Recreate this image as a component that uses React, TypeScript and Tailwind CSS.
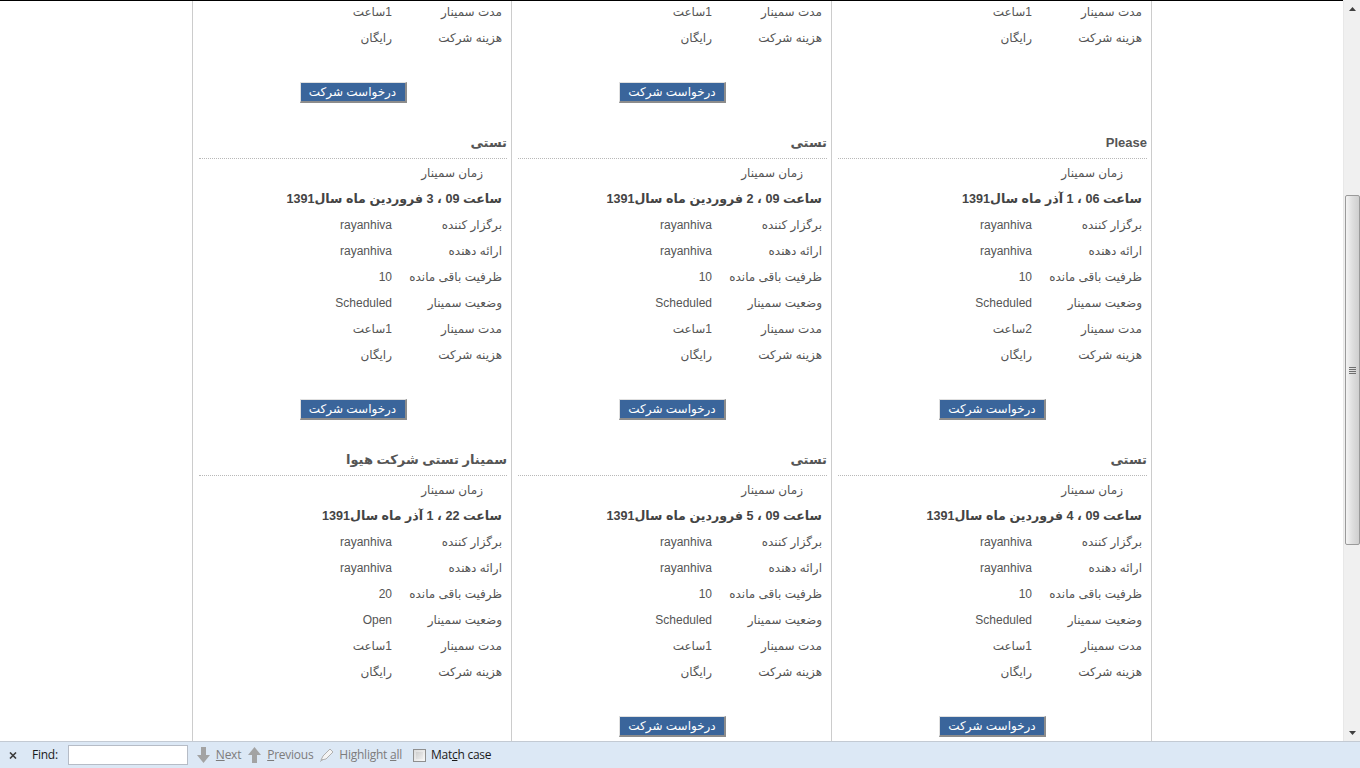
import React from 'react'

interface Seminar {
  title: string
  date: string
  capacity: string
  status: string
  duration: string
  hasButton: boolean
}

const seminars: Seminar[] = [
  { title: 'تستی', date: 'ساعت 09 ، 1 فروردین ماه سال1391', capacity: '10', status: 'Scheduled', duration: '1ساعت', hasButton: false },
  { title: 'تستی', date: 'ساعت 09 ، 1 فروردین ماه سال1391', capacity: '10', status: 'Scheduled', duration: '1ساعت', hasButton: true },
  { title: 'تستی', date: 'ساعت 09 ، 1 فروردین ماه سال1391', capacity: '10', status: 'Scheduled', duration: '1ساعت', hasButton: true },
  { title: 'Please', date: 'ساعت 06 ، 1 آذر ماه سال1391', capacity: '10', status: 'Scheduled', duration: '2ساعت', hasButton: true },
  { title: 'تستی', date: 'ساعت 09 ، 2 فروردین ماه سال1391', capacity: '10', status: 'Scheduled', duration: '1ساعت', hasButton: true },
  { title: 'تستی', date: 'ساعت 09 ، 3 فروردین ماه سال1391', capacity: '10', status: 'Scheduled', duration: '1ساعت', hasButton: true },
  { title: 'تستی', date: 'ساعت 09 ، 4 فروردین ماه سال1391', capacity: '10', status: 'Scheduled', duration: '1ساعت', hasButton: true },
  { title: 'تستی', date: 'ساعت 09 ، 5 فروردین ماه سال1391', capacity: '10', status: 'Scheduled', duration: '1ساعت', hasButton: true },
  { title: 'سمینار تستی شرکت هیوا', date: 'ساعت 22 ، 1 آذر ماه سال1391', capacity: '20', status: 'Open', duration: '1ساعت', hasButton: false },
]

function SeminarCard({ s }: { s: Seminar }) {
  const fields: [string, string][] = [
    ['برگزار کننده', 'rayanhiva'],
    ['ارائه دهنده', 'rayanhiva'],
    ['ظرفیت باقی مانده', s.capacity],
    ['وضعیت سمینار', s.status],
    ['مدت سمینار', s.duration],
    ['هزینه شرکت', 'رایگان'],
  ]
  return (
    <div className="h-[317px] border-r border-[#cccccc] pl-[6px] pr-[4px] pt-[10px]">
      <h3 className="h-[27px] border-b border-dotted border-[#b8b8b8] pb-[6px] text-[13px] font-bold leading-[22px] text-[#555555]">
        {s.title}
      </h3>
      <div className="mt-[4px] h-[20px] pr-[24px] text-[12px] leading-[20px] text-[#555555]">زمان سمینار</div>
      <div className="mt-[5px] h-[20px] pr-[5px] text-[12.6px] font-bold leading-[22px] text-[#444444]">{s.date}</div>
      <div className="mt-[4px] flex flex-col">
        {fields.map(([label, value]) => (
          <div key={label} className="flex h-[26px] items-center pr-[5px] text-[12px] text-[#555555]">
            <span className="w-[110px] shrink-0">{label}</span>
            <span>{value}</span>
          </div>
        ))}
      </div>
      <div className="mt-[31px] flex h-[21px] justify-center">
        {s.hasButton && (
          <button className="h-[21px] w-[107px] border-t border-l border-r-2 border-b-2 border-t-[#e0e0e0] border-l-[#e0e0e0] border-r-[#8c8c8c] border-b-[#8c8c8c] bg-[#3a659b] text-[12px] leading-[17px] text-white">
            درخواست شرکت
          </button>
        )}
      </div>
    </div>
  )
}

function Scrollbar() {
  return (
    <div className="flex w-[17px] flex-col border-l border-[#e8e8e8] bg-[#f0f0f0]">
      <div className="flex h-[17px] items-center justify-center">
        <svg width="7" height="4" viewBox="0 0 7 4"><path d="M0 4 L3.5 0 L7 4 Z" fill="#404040" /></svg>
      </div>
      <div className="h-[178px]" />
      <div className="mx-auto flex h-[350px] w-[15px] items-center justify-center rounded-[2px] border border-[#9a9a9a] bg-gradient-to-r from-[#f4f4f4] via-[#dedede] to-[#cfcfcf]">
        <div className="flex flex-col gap-[1px]">
          <div className="h-[1px] w-[7px] bg-[#6f6f6f]" />
          <div className="h-[1px] w-[7px] bg-[#6f6f6f]" />
          <div className="h-[1px] w-[7px] bg-[#6f6f6f]" />
          <div className="h-[1px] w-[7px] bg-[#6f6f6f]" />
        </div>
      </div>
      <div className="flex-1" />
      <div className="flex h-[17px] items-center justify-center">
        <svg width="7" height="4" viewBox="0 0 7 4"><path d="M0 0 L3.5 4 L7 0 Z" fill="#404040" /></svg>
      </div>
    </div>
  )
}

function Arrow({ up }: { up?: boolean }) {
  return (
    <svg width="13" height="16" viewBox="0 0 13 16" className={up ? 'rotate-180' : ''}>
      <path d="M4 0 H9 V8 H13 L6.5 16 L0 8 H4 Z" fill="#a3a3a3" />
    </svg>
  )
}

function FindBar() {
  return (
    <div className="flex h-[27px] items-center border-t border-[#c3cad3] bg-[#dce8f5] font-['Open_Sans',sans-serif] text-[12px] tracking-[-0.25px] text-[#1a1a1a]">
      <svg width="8" height="7" viewBox="0 0 8 7" className="ml-[9px]">
        <path d="M1 0.5 L7 6.5 M7 0.5 L1 6.5" stroke="#3c3c3c" strokeWidth="1.6" />
      </svg>
      <span className="ml-[15px]">Find:</span>
      <div className="ml-[10px] h-[20px] w-[120px] border border-[#b6bcc6] bg-white" />
      <span className="ml-[9px] flex items-center"><Arrow /></span>
      <span className="ml-[6px] text-[#7c7c7c]"><span className="underline">N</span>ext</span>
      <span className="ml-[7px] flex items-center"><Arrow up /></span>
      <span className="ml-[6px] text-[#7c7c7c]"><span className="underline">P</span>revious</span>
      <svg width="15" height="14" viewBox="0 0 15 14" className="ml-[6px]">
        <path d="M2 12 L4 8 L11 1 L14 4 L7 11 Z" fill="#f4f4f4" stroke="#b0b0b0" strokeWidth="1" />
        <path d="M1 13.5 L4 11.5" stroke="#b0b0b0" strokeWidth="1" />
      </svg>
      <span className="ml-[5px] text-[#7c7c7c]">Highlight <span className="underline">a</span>ll</span>
      <div className="ml-[11px] h-[13px] w-[13px] border border-[#8f8f8f] bg-gradient-to-br from-[#dcdcdc] to-[#f8f8f8] p-[2px]">
        <div className="h-full w-full bg-gradient-to-br from-[#cfcfcf] to-[#eeeeee]" />
      </div>
      <span className="ml-[5px]">Mat<span className="underline">c</span>h case</span>
    </div>
  )
}

export default function App() {
  return (
    <div className="flex h-[768px] w-[1360px] flex-col overflow-hidden bg-white font-['Liberation_Sans','DejaVu_Sans',sans-serif]">
      <div className="flex min-h-0 flex-1">
        <div className="min-w-0 flex-1 overflow-hidden border-t border-black">
          <div
            dir="rtl"
            className="-mt-[196px] ml-[192px] grid w-[960px] grid-cols-[320px_320px_319px] border-l border-[#cccccc]"
          >
            {seminars.map((s, i) => (
              <SeminarCard key={i} s={s} />
            ))}
          </div>
        </div>
        <Scrollbar />
      </div>
      <FindBar />
    </div>
  )
}
